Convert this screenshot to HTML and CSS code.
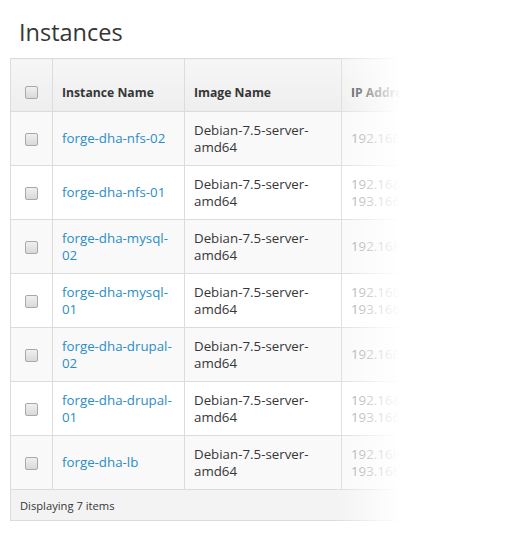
FILE: index.html
```html
<!DOCTYPE html>
<html>
<head>
<meta charset="utf-8">
<link rel="stylesheet" href="styles.css">
</head>
<body>
<div class="page">
  <h1 class="title">Instances</h1>
  <div class="table-wrap">
    <table class="table">
      <colgroup>
        <col class="c-check"><col class="c-name"><col class="c-image"><col class="c-ip">
      </colgroup>
      <thead>
        <tr>
          <th class="check"><span class="box"></span></th>
          <th>Instance Name</th>
          <th>Image Name</th>
          <th>IP Address</th>
        </tr>
      </thead>
      <tbody>
        <tr>
          <td class="check"><span class="box"></span></td>
          <td><a href="#">forge-dha-nfs-02</a></td>
          <td>Debian-7.5-server-amd64</td>
          <td class="ip">192.168.0.12</td>
        </tr>
        <tr>
          <td class="check"><span class="box"></span></td>
          <td><a href="#">forge-dha-nfs-01</a></td>
          <td>Debian-7.5-server-amd64</td>
          <td class="ip">192.168.0.11<br>193.166.0.11</td>
        </tr>
        <tr>
          <td class="check"><span class="box"></span></td>
          <td><a href="#">forge-dha-mysql-02</a></td>
          <td>Debian-7.5-server-amd64</td>
          <td class="ip">192.168.0.22</td>
        </tr>
        <tr>
          <td class="check"><span class="box"></span></td>
          <td><a href="#">forge-dha-mysql-01</a></td>
          <td>Debian-7.5-server-amd64</td>
          <td class="ip">192.168.0.21<br>193.166.0.21</td>
        </tr>
        <tr>
          <td class="check"><span class="box"></span></td>
          <td><a href="#">forge-dha-drupal-02</a></td>
          <td>Debian-7.5-server-amd64</td>
          <td class="ip">192.168.0.32</td>
        </tr>
        <tr>
          <td class="check"><span class="box"></span></td>
          <td><a href="#">forge-dha-drupal-01</a></td>
          <td>Debian-7.5-server-amd64</td>
          <td class="ip">192.168.0.31<br>193.166.0.31</td>
        </tr>
        <tr>
          <td class="check"><span class="box"></span></td>
          <td><a href="#">forge-dha-lb</a></td>
          <td>Debian-7.5-server-amd64</td>
          <td class="ip">192.168.0.40<br>193.166.0.40</td>
        </tr>
      </tbody>
      <tfoot>
        <tr>
          <td colspan="4" class="footer">Displaying 7 items</td>
        </tr>
      </tfoot>
    </table>
    <div class="fade"></div>
  </div>
</div>
</body>
</html>
```

FILE: styles.css
```css
html, body {
  margin: 0;
  padding: 0;
  background: #fff;
}

body {
  font-family: "Open Sans", "Noto Sans", sans-serif;
  color: #363636;
}

.page {
  padding: 0 10px;
}

.title {
  margin: 0;
  padding: 16px 0 0 9px;
  font-size: 23.5px;
  font-weight: 400;
  line-height: 32px;
  color: #363636;
  height: 42px;
}

.table-wrap {
  position: relative;
  width: 500px;
  overflow: hidden;
}

.table {
  border-collapse: collapse;
  table-layout: fixed;
  width: 480px;
  font-size: 13.3px;
}

.c-check { width: 42px; }
.c-name { width: 132px; }
.c-image { width: 157px; }
.c-ip { width: 149px; }

.table th,
.table td {
  border: 1px solid #dcdcdc;
  padding: 8px 9px;
  text-align: left;
  vertical-align: middle;
  line-height: 17px;
}

.table th {
  height: 34px;
  padding: 8px 9px 10px;
  vertical-align: bottom;
  font-size: 12.2px;
  font-weight: 700;
  background: linear-gradient(#f6f6f6, #eeeeee);
}

.table td {
  height: 37px;
}

.table tbody tr:nth-child(odd) td {
  background: #f9f9f9;
}

.table tbody tr:nth-child(even) td {
  background: #ffffff;
}

.table .check {
  text-align: center;
  padding-left: 0;
  padding-right: 0;
}

.box {
  display: inline-block;
  width: 11px;
  height: 11px;
  border: 1px solid #a9a9a9;
  border-radius: 2px;
  background: linear-gradient(#f0f0f0, #d9d9d9);
  vertical-align: middle;
}

.table th .box {
  vertical-align: -2px;
}

.table a {
  color: #2b8dc7;
  text-decoration: none;
}

.table .ip {
  color: #9a9a9a;
}

.table td.footer {
  height: 14px;
  padding: 7px 9px 6px;
  font-size: 11.2px;
  background: #f3f3f3;
  color: #363636;
}

.fade {
  position: absolute;
  top: 0;
  bottom: 0;
  left: 325px;
  right: 0;
  background: linear-gradient(to right, rgba(255,255,255,0) 0, #fff 65px, #fff 100%);
}
```
